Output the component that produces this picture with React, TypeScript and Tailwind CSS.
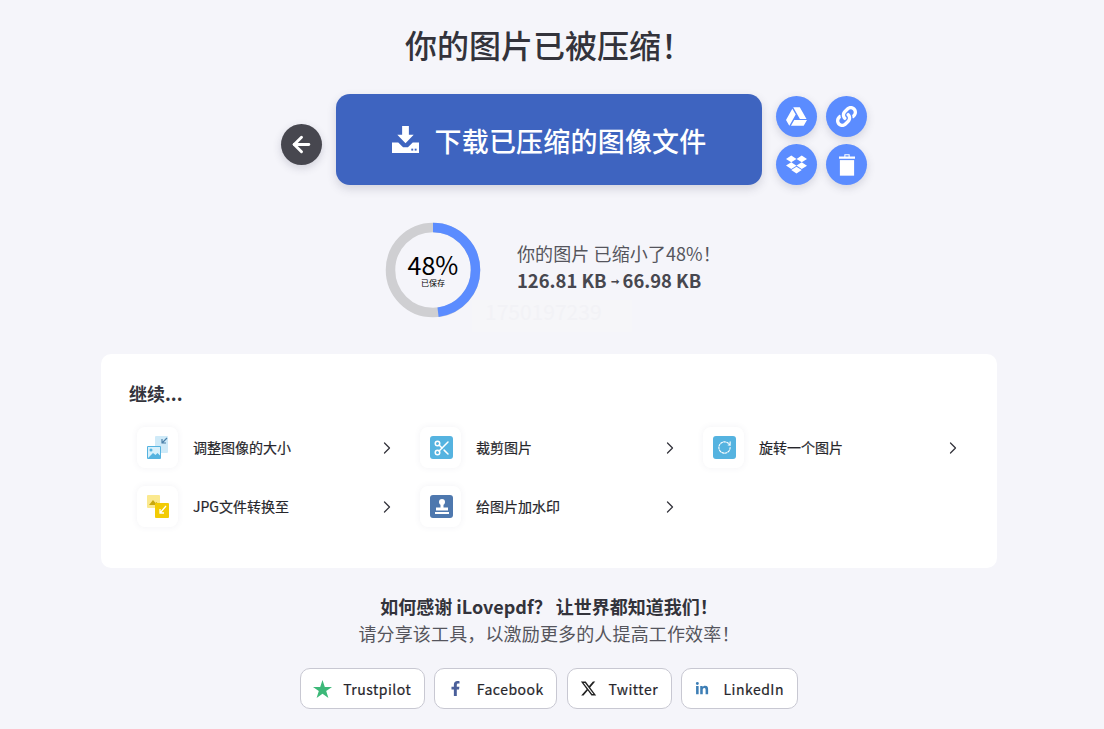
import { ReactNode } from "react";
import { FaDropbox, FaFacebookF, FaGoogleDrive, FaLink, FaLinkedinIn } from "react-icons/fa";
import { FaXTwitter } from "react-icons/fa6";
import { ArrowLeft, ChevronRight, RotateCw, Scissors } from "lucide-react";

const fontStack = "font-['Noto_Sans_CJK_SC','Noto_Sans',sans-serif]";

function RoundAction({ children }: { children: ReactNode }) {
  return (
    <div className="flex h-[41px] w-[41px] items-center justify-center rounded-full bg-[#5b8cff] text-white shadow-[0_3px_8px_rgba(60,60,90,0.18)]">
      {children}
    </div>
  );
}

function DownloadIcon() {
  return (
    <svg width="27" height="27" viewBox="0 0 28 28" fill="#fff">
      <path d="M10.5 0h7v9h5L14 18 5.500 9h5z" />
      <path d="M0 17h6.500l5 5h5l5-5H28v11H0z" />
      <rect x="20" y="23.500" width="2" height="2" fill="#3e64c0" />
      <rect x="23.500" y="23.500" width="2" height="2" fill="#3e64c0" />
    </svg>
  );
}

function TrashIcon() {
  return (
    <svg width="16" height="22" viewBox="0 0 18 24" fill="#fff">
      <path d="M6 0h6v2.500h6V5H0V2.500h6zM7.200 1v1.500h3.600V1z" />
      <rect x="1" y="6.500" width="16" height="17.500" />
    </svg>
  );
}

function ResizeIcon() {
  return (
    <svg width="21" height="23" viewBox="0 0 21 23">
      <rect x="8" y="0" width="13" height="17" rx="1" fill="#cfeaf8" />
      <path d="M20 2l-5 5M15 3v4h4" stroke="#4a7fa8" strokeWidth="1.200" fill="none" />
      <rect x="0" y="10" width="14" height="13" rx="1" fill="#55b3e0" />
      <rect x="1" y="11" width="12" height="11" fill="#d8f0fb" />
      <circle cx="4" cy="14" r="1.500" fill="#55b3e0" />
      <path d="M1 22l5-5 2.500 2 2-2 2.500 2.500V22z" fill="#55b3e0" />
    </svg>
  );
}

function ConvertIcon() {
  return (
    <svg width="22" height="23" viewBox="0 0 22 23">
      <rect x="0" y="0" width="13" height="13" rx="1" fill="#fbe98f" />
      <path d="M2 10l4-5 2.500 3 1-1L12 10z" fill="#c9a80f" />
      <rect x="8" y="8" width="14" height="15" rx="1" fill="#f2cb05" />
      <path d="M19 11l-6 7M13 14v4h4" stroke="#fff" strokeWidth="1.300" fill="none" />
    </svg>
  );
}

function StampIcon() {
  return (
    <svg width="14" height="15" viewBox="0 0 14 15" fill="#fff">
      <circle cx="7" cy="3" r="3" />
      <rect x="5.500" y="4" width="3" height="5" />
      <path d="M1 8.500h12v3H1z" />
      <rect x="0" y="13" width="14" height="2" />
    </svg>
  );
}

function StarIcon() {
  return (
    <svg width="19" height="18" viewBox="0 0 19 18" fill="#3cb878">
      <path d="M9.500 0l2.300 6.900H19l-5.800 4.200 2.200 6.900-5.900-4.300L3.600 18l2.200-6.900L0 6.900h7.200z" />
    </svg>
  );
}

function Tile({ color, children }: { color: string; children: ReactNode }) {
  return <div className={`ml-[2px] flex h-[23px] w-[23px] items-center justify-center rounded-[3px] ${color}`}>{children}</div>;
}

const tools = [
  { label: "调整图像的大小", icon: <ResizeIcon /> },
  {
    label: "裁剪图片",
    icon: (
      <Tile color="bg-[#55b3e0]">
        <Scissors size={18} color="#fff" strokeWidth={2} />
      </Tile>
    ),
  },
  {
    label: "旋转一个图片",
    icon: (
      <Tile color="bg-[#55b3e0]">
        <RotateCw size={15} color="#fff" strokeWidth={1.800} strokeDasharray="3 2" />
      </Tile>
    ),
  },
  { label: "JPG文件转换至", icon: <ConvertIcon /> },
  {
    label: "给图片加水印",
    icon: (
      <Tile color="bg-[#4e78ae]">
        <StampIcon />
      </Tile>
    ),
  },
];

const socials = [
  { label: "Trustpilot", box: "w-[125px] gap-[11px]", icon: <StarIcon /> },
  { label: "Facebook", box: "w-[123px] gap-[14px]", icon: <FaFacebookF size={15} color="#4a5f9a" /> },
  { label: "Twitter", box: "w-[105px] gap-[11px]", icon: <FaXTwitter size={17} color="#222" /> },
  { label: "LinkedIn", box: "w-[117px] gap-[14px]", icon: <FaLinkedinIn size={14} color="#3d7eb5" /> },
];

export default function App() {
  return (
    <div className={`h-[729px] overflow-hidden bg-[#f5f5fa] text-[#33333b] ${fontStack}`}>
      <div className="flex w-[1098px] flex-col items-center">
        <h1 className="mt-[20px] text-[32px] leading-[48px] font-medium">{"你的图片已被压缩\uFF01"}</h1>

        <div className="mt-[26px] ml-[50px] flex w-[586px] items-start">
          <div className="mt-[30px] flex h-[41px] w-[41px] items-center justify-center rounded-full bg-[#47474f] shadow-[0_3px_8px_rgba(60,60,90,0.2)]">
            <ArrowLeft size={25} color="#fff" strokeWidth={2.800} />
          </div>
          <div className="ml-[14px] flex h-[91px] w-[426px] items-center justify-center gap-[16px] rounded-[14px] bg-[#3e64c0] shadow-[0_4px_10px_rgba(60,60,90,0.18)]">
            <DownloadIcon />
            <span className="pt-[3px] text-[27px] font-medium tracking-[0.2px] text-white">下载已压缩的图像文件</span>
          </div>
          <div className="mt-[2px] ml-[14px] grid grid-cols-[41px_41px] gap-x-[9px] gap-y-[7px]">
            <RoundAction>
              <FaGoogleDrive size={21} />
            </RoundAction>
            <RoundAction>
              <FaLink size={21} />
            </RoundAction>
            <RoundAction>
              <FaDropbox size={21} />
            </RoundAction>
            <RoundAction>
              <TrashIcon />
            </RoundAction>
          </div>
        </div>

        <div className="relative mt-[37px] ml-[6px] flex w-[334px] items-center">
          <svg width="96" height="96" viewBox="0 0 96 96" className="shrink-0">
            <circle cx="48" cy="48" r="42.500" fill="none" stroke="#cfcfd2" strokeWidth="9.500" />
            <circle
              cx="48"
              cy="48"
              r="42.500"
              fill="none"
              stroke="#5b8cff"
              strokeWidth="9.500"
              strokeDasharray="128.200 267"
              transform="rotate(-90 48 48)"
            />
          </svg>
          <div className="absolute top-0 left-0 flex h-[96px] w-[96px] flex-col items-center justify-center text-black">
            <span className="text-[25px] leading-[24px]">48%</span>
            <span className="mt-[2px] text-[8px] leading-[10px]">已保存</span>
          </div>
          <div className="mb-[6px] ml-[36px]">
            <p className="text-[18px] leading-[27px] tracking-[0.1px] whitespace-nowrap text-[#55555d]">{"你的图片 已缩小了48%\uFF01"}</p>
            <p className="flex items-center gap-[4px] text-[18.400px] leading-[27px] font-bold whitespace-nowrap text-[#47474f]">
              <span>126.81 KB</span>
              <span className="text-[10px] leading-[27px]">➞</span>
              <span>66.98 KB</span>
            </p>
          </div>
          <div className="absolute top-[78px] left-[87px] flex h-[32px] w-[160px] items-center bg-[#f6f6f9] pb-[10px] pl-[13px] text-[21px] leading-[22px] text-[#f2f2f6]">
            1750197239
          </div>
        </div>

        <div className="mt-[36px] h-[214px] w-[896px] rounded-[10px] bg-white px-[28px] pt-[24px]">
          <h2 className="text-[18px] leading-[30px] font-bold">继续...</h2>
          <div className="mt-[19px] ml-[8px] grid grid-cols-[283px_283px_283px] gap-y-[18px]">
            {tools.map((tool) => (
              <div key={tool.label} className="flex w-[260px] items-center">
                <div className="flex h-[41px] w-[41px] items-center justify-center rounded-[8px] bg-white shadow-[0_0_6px_rgba(90,90,130,0.08)]">
                  {tool.icon}
                </div>
                <span className="ml-[15px] flex-1 pb-[1px] text-[14px] text-[#26262b] [-webkit-text-stroke:0.2px_#26262b]">{tool.label}</span>
                <ChevronRight size={20} color="#33333b" strokeWidth={1.500} />
              </div>
            ))}
          </div>
        </div>

        <p className="mt-[24px] text-[18px] leading-[28px] font-bold">{"如何感谢 iLovepdf\uFF1F 让世界都知道我们\uFF01"}</p>
        <p className="text-[18px] leading-[26px] tracking-[0.15px] text-[#55555d]">{"请分享该工具\uFF0C以激励更多的人提高工作效率\uFF01"}</p>

        <div className="mt-[22px] flex gap-[9.500px]">
          {socials.map((item) => (
            <div
              key={item.label}
              className={`flex h-[41px] items-center justify-center rounded-[10px] border border-[#c8c8d2] bg-white ${item.box}`}
            >
              {item.icon}
              <span className="pt-[1px] text-[14px] tracking-[0.5px] text-[#26262b] [-webkit-text-stroke:0.2px_#26262b]">{item.label}</span>
            </div>
          ))}
        </div>
      </div>
    </div>
  );
}
